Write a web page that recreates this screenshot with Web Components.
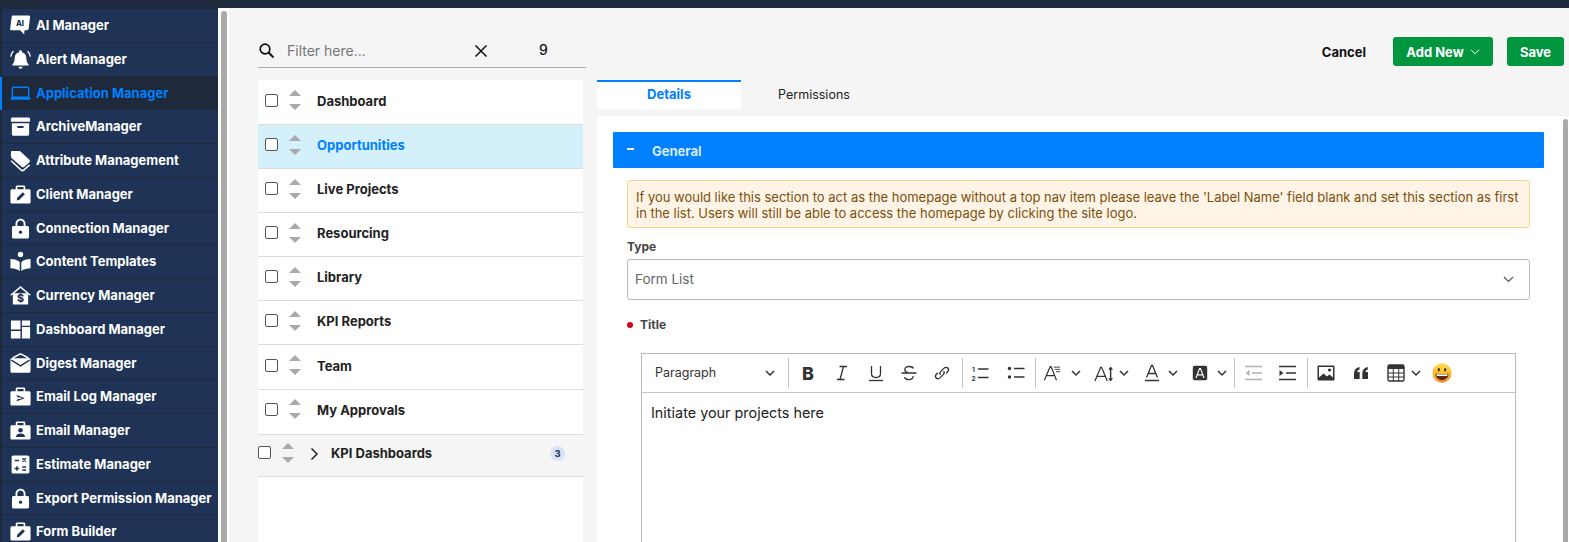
<!DOCTYPE html>
<html lang="en">
<head>
<meta charset="utf-8">
<title>Application Manager</title>
<style>
  html, body { margin: 0; height: 100%; overflow: hidden; }
  body { font-family: Inter, "Liberation Sans", sans-serif; background: #f5f5f5; }
</style>
</head>
<body>
<app-shell>
  <side-nav slot="nav">
    <nav-item icon="ai">AI Manager</nav-item>
    <nav-item icon="bell">Alert Manager</nav-item>
    <nav-item icon="laptop" active>Application Manager</nav-item>
    <nav-item icon="archive">ArchiveManager</nav-item>
    <nav-item icon="tags">Attribute Management</nav-item>
    <nav-item icon="casePen">Client Manager</nav-item>
    <nav-item icon="lock">Connection Manager</nav-item>
    <nav-item icon="reader">Content Templates</nav-item>
    <nav-item icon="house">Currency Manager</nav-item>
    <nav-item icon="quad">Dashboard Manager</nav-item>
    <nav-item icon="digest">Digest Manager</nav-item>
    <nav-item icon="caseLog">Email Log Manager</nav-item>
    <nav-item icon="casePerson">Email Manager</nav-item>
    <nav-item icon="calc">Estimate Manager</nav-item>
    <nav-item icon="lock">Export Permission Manager</nav-item>
    <nav-item icon="casePen">Form Builder</nav-item>
  </side-nav>

  <section slot="list">
    <filter-bar count="9"></filter-bar>
    <menu-list>
      <menu-row>Dashboard</menu-row>
      <menu-row selected>Opportunities</menu-row>
      <menu-row>Live Projects</menu-row>
      <menu-row>Resourcing</menu-row>
      <menu-row>Library</menu-row>
      <menu-row>KPI Reports</menu-row>
      <menu-row>Team</menu-row>
      <menu-row tail>My Approvals</menu-row>
      <menu-row group badge="3">KPI Dashboards</menu-row>
    </menu-list>
  </section>

  <top-actions slot="actions"></top-actions>
  <tab-strip slot="tabs"></tab-strip>

  <detail-panel slot="panel">
    <accordion-head>General</accordion-head>
    <notice-box>If you would like this section to act as the homepage without a top nav item please leave the 'Label Name' field blank and set this section as first in the list. Users will still be able to access the homepage by clicking the site logo.</notice-box>
    <form-select label="Type" value="Form List"></form-select>
    <required-label>Title</required-label>
    <rich-editor>Initiate your projects here</rich-editor>
  </detail-panel>
</app-shell>

<script>
const NAV_ICONS = {
  ai: `<path d="M4.500 1.500h16c1 0 1.600.7 1.500 1.700l-1.500 12.300c-.1 1-.8 1.500-1.700 1.500h-2.600l-.4 4.500-4.200-4.500H2.700c-1 0-1.600-.7-1.500-1.700L2.800 3c.1-1 .8-1.500 1.700-1.500z"/><text x="11.500" y="12.800" text-anchor="middle" font-family="Inter" font-size="8" font-weight="800" fill="#1e3356">AI</text>`,
  bell: `<path d="M12 2.400c.9 0 1.500.6 1.500 1.400v.6c2.900.7 4.600 3.100 4.600 6.100 0 3 .6 4.800 2.200 6.400.5.6.2 1.400-.6 1.400H4.300c-.8 0-1.100-.8-.6-1.400 1.600-1.600 2.200-3.400 2.200-6.400 0-3 1.700-5.400 4.600-6.100v-.6c0-.8.6-1.400 1.500-1.400z"/><path d="M9.800 19.600h4.400c0 1.200-1 2.100-2.200 2.100s-2.200-.9-2.200-2.100z"/><path d="M4.600 3.400C3 4.800 2 6.800 1.800 9M19.400 3.400C21 4.800 22 6.800 22.200 9" fill="none" stroke="currentColor" stroke-width="1.500"/>`,
  laptop: `<path d="M4.500 5.500h15a1 1 0 0 1 1 1V16h-17V6.500a1 1 0 0 1 1-1z" fill="none" stroke="currentColor" stroke-width="1.500"/><path d="M1.500 16.500h21v.6c0 .9-.7 1.500-1.500 1.500H3c-.8 0-1.500-.6-1.500-1.500z"/>`,
  archive: `<path d="M3.500 2.500h17c.8 0 1.500.7 1.500 1.500v3H2V4c0-.8.7-1.500 1.500-1.500z"/><path fill-rule="evenodd" d="M3 8.500h18V20c0 .9-.7 1.600-1.600 1.600H4.600C3.700 21.600 3 20.900 3 20zm5.800 3v2h6.400v-2z"/>`,
  tags: `<path d="M3 2h7.500c.6 0 1.100.2 1.500.6l9.300 8.700c.7.7.7 1.700 0 2.400l-5.500 5c-.7.6-1.600.6-2.300 0L2.600 9.300C2.200 8.900 2 8.400 2 7.800V3c0-.6.4-1 1-1z"/><path d="M2.200 11.300 12.800 21c.8.700 1.800.7 2.600 0l6.100-5.500" fill="none" stroke="currentColor" stroke-width="1.600" transform="translate(0 1)"/>`,
  casePen: `<path fill-rule="evenodd" d="M8.500 2.500h7c.9 0 1.500.7 1.500 1.500v2.500h4c.8 0 1.500.7 1.500 1.500v12c0 .8-.7 1.500-1.500 1.500H3c-.8 0-1.500-.7-1.500-1.500V8c0-.8.7-1.500 1.500-1.500h4V4c0-.8.6-1.500 1.500-1.500zm.3 1.600v2.400h6.400V4.100z"/><path d="m8 18.200.6-2.800 5.800-5.800 2.200 2.200-5.800 5.800z" fill="#1e3356"/>`,
  lock: `<path fill-rule="evenodd" d="M12 1.800c3 0 5.200 2.300 5.200 5.200v2.500h2.100c.9 0 1.600.7 1.600 1.600v9.700c0 .9-.7 1.600-1.600 1.600H4.700c-.9 0-1.600-.7-1.600-1.600v-9.700c0-.9.7-1.600 1.600-1.600h2.100V7c0-2.900 2.200-5.200 5.200-5.200zm0 1.900C10.100 3.700 8.700 5.100 8.700 7v2.500h6.600V7c0-1.900-1.400-3.300-3.300-3.300z"/><circle cx="12" cy="15.900" r="1.700" fill="#1e3356"/>`,
  reader: `<circle cx="12" cy="4.600" r="2.800"/><path d="M1.500 9.500c4 .1 7.500 1.200 9.700 3.200v9.100c-2.500-1.700-5.900-2.500-9.700-2.700zM22.500 9.500c-4 .1-7.500 1.200-9.700 3.200v9.100c2.500-1.700 5.900-2.500 9.700-2.700z"/>`,
  house: `<path d="M12 2 22.700 11.200l-.8 1.100-1.900-1.500V21.500H4V10.800l-1.900 1.500-.8-1.100z"/><path d="M12 4.300 5.500 9.700h13z" fill="#1e3356"/><text x="12" y="19.300" text-anchor="middle" font-family="Inter" font-size="11" font-weight="800" fill="#1e3356">$</text>`,
  quad: `<path d="M2 2.500h10v9.500H2zM13.500 2.500H22V8h-8.500zM13.500 9.500H22V21.500h-8.500zM2 13.500h10v8H2z"/>`,
  digest: `<path d="M4.500 8V5.800L12 2l7.500 3.800V8" fill="none" stroke="currentColor" stroke-width="1.500"/><path d="M1.500 7.500c0-.6.5-1 1-1h19c.5 0 1 .4 1 1V20c0 .9-.7 1.600-1.600 1.600H3.100c-.9 0-1.600-.7-1.600-1.600z"/><path d="m2.500 8.500 9.500 6 9.500-6" fill="none" stroke="#1e3356" stroke-width="1.500"/>`,
  caseLog: `<path fill-rule="evenodd" d="M8.500 2.500h7c.9 0 1.500.7 1.500 1.500v2.500h4c.8 0 1.500.7 1.500 1.500v12c0 .8-.7 1.500-1.500 1.500H3c-.8 0-1.500-.7-1.500-1.500V8c0-.8.7-1.500 1.500-1.500h4V4c0-.8.6-1.500 1.500-1.500zm.3 1.600v2.400h6.400V4.100z"/><path d="M7.500 10.200 16.500 13.700 7.500 17.200l1.700-2.700h3.600v-1.500H9.200z" fill="#1e3356"/>`,
  casePerson: `<path fill-rule="evenodd" d="M8.500 2.500h7c.9 0 1.500.7 1.500 1.500v2.500h4c.8 0 1.500.7 1.500 1.500v12c0 .8-.7 1.500-1.500 1.500H3c-.8 0-1.500-.7-1.500-1.500V8c0-.8.7-1.500 1.500-1.500h4V4c0-.8.6-1.500 1.500-1.500zm.3 1.600v2.400h6.400V4.100z"/><circle cx="12" cy="11.800" r="2.400" fill="#1e3356"/><path d="M7.300 18.700c0-2.300 2-3.500 4.700-3.500s4.700 1.200 4.700 3.500z" fill="#1e3356"/>`,
  calc: `<path d="M4.500 2.500h15c1 0 1.800.8 1.800 1.800v15.400c0 1-.8 1.800-1.800 1.800h-15c-1 0-1.800-.8-1.800-1.800V4.300c0-1 .8-1.800 1.800-1.800z"/><path d="M6 7.800h4.500M14 5.600l3.600 3.600M17.600 5.600 14 9.200M5.800 16.200h4.800M8.200 13.800v4.800M13.800 14.700h4M13.800 17.700h4" fill="none" stroke="#1e3356" stroke-width="1.500"/>`
};

const TOOL_ICONS = {
  bold: `<text x="10" y="16.500" text-anchor="middle" font-family="Inter" font-size="18" font-weight="800" fill="#333">B</text>`,
  italic: `<path d="M7.500 3.500h7.500M5 16.500h7.500M11.500 3.500 8 16.500" fill="none" stroke="#333" stroke-width="1.300"/>`,
  underline: `<path d="M5.500 3v7.500c0 2.700 1.800 4 4.500 4s4.500-1.300 4.500-4V3" fill="none" stroke="#333" stroke-width="1.300"/><path d="M3 17.500h14" stroke="#333" stroke-width="1.300"/>`,
  strike: `<path d="M14.500 5.500C13.800 4 12 3.500 10 3.500c-2.500 0-4.200 1.200-4.200 3 0 1.500 1 2.400 3 3M14 13c.6 2-1.500 3.700-4 3.700-2.100 0-3.900-.9-4.600-2.500M2.500 10h15" fill="none" stroke="#333" stroke-width="1.300"/>`,
  link: `<path d="M8.500 11.800c-1-1-.8-2.300.3-3.400l3-3c1.300-1.300 3-1.400 4-.4s.9 2.700-.4 4l-1.400 1.400M11.500 8.200c1 1 .8 2.300-.3 3.400l-3 3c-1.300 1.300-3 1.400-4 .4s-.9-2.700.4-4l1.400-1.400" fill="none" stroke="#333" stroke-width="1.300"/>`,
  ol: `<path d="M8 6h10.500M8 14.500h10.500" stroke="#333" stroke-width="1.500"/><text x="3.500" y="8.500" text-anchor="middle" font-family="Inter" font-size="6.500" font-weight="700" fill="#333">1</text><text x="3.500" y="17.500" text-anchor="middle" font-family="Inter" font-size="6.500" font-weight="700" fill="#333">2</text>`,
  ul: `<circle cx="3.500" cy="5.500" r="1.700" fill="#333"/><circle cx="3.500" cy="14" r="1.700" fill="#333"/><path d="M8 5.500h10.500M8 14h10.500" stroke="#333" stroke-width="1.500"/>`,
  size: `<path d="M1.500 18 8 3h1l6 15M4 13h9.500" fill="none" stroke="#333" stroke-width="1.300"/><path d="M12 3.500h7M13 6h6M14.500 8.500h4.500" stroke="#333" stroke-width="1"/>`,
  height: `<path d="M1 18 7 3.500h1L14 18M3.300 13h9" fill="none" stroke="#333" stroke-width="1.300"/><path d="M17.500 4v13" stroke="#333" stroke-width="1.500"/><path d="m15 6 2.500-3.500L20 6zM15 15l2.500 3.500L20 15z" fill="#333"/>`,
  color: `<path d="M4.500 14.500 9.500 2.500h1l5 12M6.300 10.500h7.400" fill="none" stroke="#333" stroke-width="1.300"/><path d="M3 17.500h14" stroke="#333" stroke-width="1.500"/>`,
  bg: `<rect x="2" y="2" width="16" height="16" rx="2" fill="#333"/><path d="M5.500 15.500 9.500 5h1l4 10.500M7 12h6" fill="none" stroke="#fff" stroke-width="1.300"/>`,
  outdent: `<path d="M2 3.500h17M9 10h10M2 16.500h17" stroke="#b0b0b0" stroke-width="1.500"/><path d="M6.500 7 2.500 10l4 3z" fill="#b0b0b0"/>`,
  indent: `<path d="M2 3.500h17M9 10h10M2 16.500h17" stroke="#333" stroke-width="1.500"/><path d="M2.500 7 6.500 10l-4 3z" fill="#333"/>`,
  image: `<path fill-rule="evenodd" d="M2.500 2.500h15c.6 0 1 .4 1 1v13c0 .6-.4 1-1 1h-15c-.6 0-1-.4-1-1v-13c0-.6.4-1 1-1zM3 4v10.500l4.500-4 3.500 3 2.500-2 3.500 3V4z" fill="#333"/><circle cx="13.500" cy="7" r="1.600" fill="#333"/>`,
  quote: `<path d="M3 16V10.500C3 7 5 4.800 8.500 4v2.600c-1.500.5-2.200 1.300-2.300 2.400h2.500v7zM11.300 16V10.500c0-3.500 2-5.700 5.500-6.500v2.600c-1.500.5-2.200 1.300-2.300 2.400H17v7z" fill="#333"/>`,
  table: `<rect x="2" y="2" width="16" height="16" rx="1.500" fill="none" stroke="#333" stroke-width="1.400"/><path d="M2 2h16v4H2z" fill="#333"/><path d="M2 10h16M2 14h16M7.300 6v12M12.700 6v12" stroke="#333" stroke-width="1"/>`,
  emoji: `<defs><linearGradient id="eg" x1="0" y1="0" x2="0" y2="1"><stop offset="0" stop-color="#fedf4c"/><stop offset=".6" stop-color="#fdb52e"/><stop offset="1" stop-color="#f4822a"/></linearGradient></defs><circle cx="10" cy="10" r="9.700" fill="url(#eg)"/><ellipse cx="6.800" cy="6.800" rx="1.100" ry="1.700" fill="#3a2a1a"/><ellipse cx="13.200" cy="6.800" rx="1.100" ry="1.700" fill="#3a2a1a"/><path d="M3.500 10.500c4.300 1 8.700 1 13 0 0 4.300-2.900 6.500-6.500 6.500s-6.500-2.200-6.500-6.500z" fill="#5b2b12"/><path d="M4.500 11c3.700.7 7.300.7 11 0l-.3 2H4.800z" fill="#fff"/>`
};

const chevron = `<svg width="10" height="6" viewBox="0 0 10 6"><path d="M1 1l4 4 4-4" fill="none" stroke="#333" stroke-width="1.500"/></svg>`;

class AppShell extends HTMLElement {
  constructor() {
    super();
    this.attachShadow({ mode: "open" }).innerHTML = `
    <style>
      :host { display: grid; grid-template-rows: 8px 1fr; height: 542px; overflow: hidden; }
      .topbar { background: #1e293b; }
      .body { display: grid; grid-template-columns: 218px 11px 368px 1fr; min-height: 0; }
      .rail { background: #fff; padding: 3px 2px 0 3px; }
      .rail i { display: block; height: 100%; background: #aaa; border-radius: 3px 3px 0 0; }
      .middle { display: flex; flex-direction: column; padding-left: 29px; }
      .right { display: flex; flex-direction: column; min-width: 0; }
    </style>
    <div class="topbar"></div>
    <div class="body">
      <slot name="nav"></slot>
      <div class="rail"><i></i></div>
      <div class="middle"><slot name="list"></slot></div>
      <div class="right">
        <slot name="actions"></slot>
        <slot name="tabs"></slot>
        <slot name="panel"></slot>
      </div>
    </div>`;
  }
}

class SideNav extends HTMLElement {
  constructor() {
    super();
    this.attachShadow({ mode: "open" }).innerHTML = `
    <style>
      :host { display: block; background: #1e293b; padding: 1.200px 0 0 2px; overflow: hidden; }
    </style>
    <slot></slot>`;
  }
}

class NavItem extends HTMLElement {
  connectedCallback() {
    const icon = NAV_ICONS[this.getAttribute("icon")] || "";
    this.attachShadow({ mode: "open" }).innerHTML = `
    <style>
      :host {
        display: flex; align-items: center; height: 32.75px;
        padding-left: 7px; gap: 4px;
        background: #1e3356; border-bottom: 1px solid #1e293b;
        color: #fff; font: 700 13px/1 Inter, sans-serif; white-space: nowrap;
      }
      :host([active]) { background: #1e293b; color: #0080ff; box-shadow: -2px 0 0 #0080ff; }
      svg { width: 23px; height: 23px; fill: currentColor; flex: none; }
    </style>
    <svg viewBox="0 0 24 24">${icon}</svg><slot></slot>`;
  }
}

class FilterBar extends HTMLElement {
  connectedCallback() {
    this.attachShadow({ mode: "open" }).innerHTML = `
    <style>
      :host {
        display: grid; grid-template-columns: 29px 184px 20px 1fr; align-items: center;
        height: 60px; padding-top: 26px; box-sizing: border-box;
        border-bottom: 1px solid #aaa; margin-bottom: 12px; width: 328px;
      }
      .ph { font: 400 14px/1 Inter, sans-serif; color: #777; }
      .count { font: 500 14px/1 Inter, sans-serif; color: #111; text-align: center; padding-left: 10px; margin-top: -2px; }
      svg { display: block; }
      .x { justify-self: center; }
    </style>
    <svg width="18" height="18" viewBox="0 0 18 18"><circle cx="7" cy="7" r="4.800" fill="none" stroke="#111" stroke-width="1.700"/><path d="m10.500 10.500 5 5" stroke="#111" stroke-width="1.900"/></svg>
    <span class="ph">Filter here...</span>
    <svg class="x" width="14" height="14" viewBox="0 0 14 14"><path d="M1.500 1.500l11 11M12.500 1.500l-11 11" stroke="#111" stroke-width="1.500"/></svg>
    <span class="count">${this.getAttribute("count")}</span>`;
  }
}

class MenuList extends HTMLElement {
  constructor() {
    super();
    this.attachShadow({ mode: "open" }).innerHTML = `
    <style>:host { display: block; width: 325px; height: 470px; box-sizing: border-box; padding-top: .9px; background: #fff; overflow: hidden; }</style>
    <slot></slot>`;
  }
}

class MenuRow extends HTMLElement {
  connectedCallback() {
    const group = this.hasAttribute("group");
    const badge = this.getAttribute("badge");
    this.attachShadow({ mode: "open" }).innerHTML = `
    <style>
      :host {
        display: flex; align-items: center; height: 41.1px;
        padding: 0 0 2px 7px; border-bottom: 1px solid #dcdcdc; background: #fff;
        font: 700 13px/1 Inter, sans-serif; color: #222;
      }
      :host([selected]) { background: #d3f0fb; color: #0080ff; }
      :host([tail]) { padding-bottom: 3.300px; }
      :host([group]) { background: #f5f5f5; padding: 0 0 3px; height: 38px; }
      .box {
        width: 11px; height: 11px; border: 1px solid #555; border-radius: 2px; background: #fff; flex: none;
        margin-top: -2px;
      }
      .sort { display: grid; gap: 8px; margin: -2px 0 0 11px; flex: none; }
      .sort i { display: block; width: 0; height: 0; border: 6.500px solid transparent; border-top: 0; border-bottom: 6.500px solid #aaa; }
      .sort i + i { border-bottom: 0; border-top: 6.500px solid #aaa; }
      .label { margin-left: 16px; flex: 1; }
      :host([group]) .label { margin-left: 0; }
      .caret { margin: 0 12px 0 16px; display: block; flex: none; }
      .badge {
        width: 15px; height: 15px; border-radius: 50%; background: #d9e2f5; color: #1e3356;
        font: 700 9.500px/15px Inter, sans-serif; text-align: center; margin-right: 18px;
      }
    </style>
    <span class="box"></span>
    <span class="sort"><i></i><i></i></span>
    ${group ? `<svg class="caret" width="9" height="14" viewBox="0 0 9 14"><path d="M1.500 1.500 7 7l-5.500 5.500" fill="none" stroke="#222" stroke-width="1.500"/></svg>` : ""}
    <span class="label"><slot></slot></span>
    ${badge ? `<span class="badge">${badge}</span>` : ""}`;
  }
}

class TopActions extends HTMLElement {
  constructor() {
    super();
    this.attachShadow({ mode: "open" }).innerHTML = `
    <style>
      :host { display: flex; justify-content: flex-end; align-items: center; height: 29px; margin: 29px 0 14px; padding-right: 5px; font: 700 13px/1 Inter, sans-serif; }
      .cancel { color: #111; margin: 1px 27px 0 0; }
      .btn { display: flex; align-items: center; justify-content: center; height: 29px; box-sizing: border-box; padding-top: 1px; gap: 6px; color: #fff; background: #02963f; border-radius: 3px; }
      .add { width: 100px; margin-right: 14px; }
      .save { width: 57px; }
    </style>
    <span class="cancel">Cancel</span>
    <span class="btn add">Add New <svg width="10" height="6" viewBox="0 0 10 6"><path d="M1 .8l4 4 4-4" fill="none" stroke="#fff" stroke-width="1"/></svg></span>
    <span class="btn save">Save</span>`;
  }
}

class TabStrip extends HTMLElement {
  constructor() {
    super();
    this.attachShadow({ mode: "open" }).innerHTML = `
    <style>
      :host { display: flex; height: 29px; margin-bottom: 7px; font: 400 12.500px/1 Inter, sans-serif; }
      span { display: flex; align-items: center; justify-content: center; width: 144px; box-sizing: border-box; }
      .on { background: #fff; border-top: 2px solid #0080ff; padding-bottom: 2px; color: #0080ff; font: 700 13px/1 Inter, sans-serif; }
      .off { color: #222; padding: 1px 0 0 2px; }
    </style>
    <span class="on">Details</span><span class="off">Permissions</span>`;
  }
}

class DetailPanel extends HTMLElement {
  constructor() {
    super();
    this.attachShadow({ mode: "open" }).innerHTML = `
    <style>
      :host { display: grid; grid-template-columns: 1fr 5px; flex: 1; background: #fff; min-height: 0; overflow: hidden; padding-right: 1px; height: 426px; }
      .content { padding: 16px 19px 0 17px; min-width: 0; }
      .bar { margin-top: 3px; background: #aaa; border-radius: 3px 3px 0 0; }
    </style>
    <div class="content"><slot></slot></div>
    <div class="bar"></div>`;
  }
}

class AccordionHead extends HTMLElement {
  constructor() {
    super();
    this.attachShadow({ mode: "open" }).innerHTML = `
    <style>
      :host { display: flex; align-items: center; height: 36px; box-sizing: border-box; padding: 2px 0 0 14px; background: #0080ff; color: #d6ecff; font: 700 13px/1 Inter, sans-serif; border-radius: 1px; margin: 0 0 12px -1px; }
      i { width: 7px; height: 2px; background: #e8f4ff; margin: -4px 18px 0 0; }
    </style>
    <i></i><slot></slot>`;
  }
}

class NoticeBox extends HTMLElement {
  constructor() {
    super();
    this.attachShadow({ mode: "open" }).innerHTML = `
    <style>
      :host { display: block; margin: 0 14px 0 13px; padding: 8px 2px 8px 8px; height: 48px; box-sizing: border-box; background: #fff4e5; border: 1px solid #fbd38d; border-radius: 3px; color: #7a4f0e; font: 400 12.980px/16px Inter, sans-serif; }
    </style>
    <slot></slot>`;
  }
}

class FormSelect extends HTMLElement {
  connectedCallback() {
    this.attachShadow({ mode: "open" }).innerHTML = `
    <style>
      :host { display: block; margin: 12px 14px 0 13px; }
      label { display: block; font: 700 12px/14px Inter, sans-serif; color: #444; margin-bottom: 5px; }
      .box { display: flex; align-items: center; justify-content: space-between; height: 41px; box-sizing: border-box; padding: 0 15px 0 7px; border: 1px solid #bbb; border-radius: 3px; color: #666; font: 400 13.500px/1 Inter, sans-serif; }
    </style>
    <label>${this.getAttribute("label")}</label>
    <div class="box"><span>${this.getAttribute("value")}</span><svg width="11" height="7" viewBox="0 0 11 7"><path d="M1 1l4.500 4.500L10 1" fill="none" stroke="#555" stroke-width="1.200"/></svg></div>`;
  }
}

class RequiredLabel extends HTMLElement {
  constructor() {
    super();
    this.attachShadow({ mode: "open" }).innerHTML = `
    <style>
      :host { display: flex; align-items: center; gap: 7px; margin: 18px 0 21px 13px; height: 14px; font: 700 12px/14px Inter, sans-serif; color: #444; }
      i { width: 6px; height: 6px; border-radius: 50%; background: #d0021b; }
    </style>
    <i></i><slot></slot>`;
  }
}

class ToolBtn extends HTMLElement {
  connectedCallback() {
    const name = this.getAttribute("name");
    const size = this.getAttribute("size") || 20;
    const w = this.getAttribute("w");
    const ml = this.getAttribute("ml") || 0;
    const inner = name === "chev" ? chevron : `<svg width="${size}" height="${size}" viewBox="0 0 20 20">${TOOL_ICONS[name]}</svg>`;
    this.attachShadow({ mode: "open" }).innerHTML = `
    <style>
      :host { display: flex; align-items: center; justify-content: center; flex: none; width: ${w}px; margin-left: ${ml}px; }
      svg { display: block; overflow: visible; }
    </style>${inner}`;
  }
}

class RichEditor extends HTMLElement {
  constructor() {
    super();
    const sep = ml => `<i style="margin-left:${ml}px"></i>`;
    const t = (name, w, ml, size) => `<tool-btn name="${name}" w="${w}" ${ml ? `ml="${ml}"` : ""} ${size ? `size="${size}"` : ""}></tool-btn>`;
    this.attachShadow({ mode: "open" }).innerHTML = `
    <style>
      :host { display: block; margin: 0 28px 0 27px; border: 1px solid #bbb; border-bottom: 0; height: 230px; }
      .bar { display: flex; align-items: center; height: 38px; border-bottom: 1px solid #c4c4c4; }
      .bar i { width: 1px; height: 30px; background: #c4c4c4; flex: none; }
      .para { display: flex; align-items: center; justify-content: space-between; box-sizing: border-box; width: 146px; padding: 0 13px; font: 400 12.500px/1 Inter, sans-serif; color: #333; flex: none; }
      .text { padding: 12px 9px; font: 400 14.400px/16px Inter, sans-serif; color: #222; }
    </style>
    <div class="bar">
      <div class="para"><span>Paragraph</span>${chevron}</div>
      ${sep(0)}
      ${t("bold", 38)}${t("italic", 29)}${t("underline", 40)}${t("strike", 26)}${t("link", 40)}
      ${sep(0)}
      ${t("ol", 34)}${t("ul", 38)}
      ${sep(0)}
      ${t("size", 32, 0, 18)}${t("chev", 16)}
      ${t("height", 26, 6, 19)}${t("chev", 16)}
      ${t("color", 28, 6)}${t("chev", 14)}
      ${t("bg", 24, 8, 18)}${t("chev", 20)}
      ${sep(2)}
      ${t("outdent", 35)}${t("indent", 33)}
      ${sep(4)}
      ${t("image", 36)}${t("quote", 34)}${t("table", 29, 3, 20)}${t("chev", 12)}${t("emoji", 40)}
    </div>
    <div class="text"><slot></slot></div>`;
  }
}

customElements.define("tool-btn", ToolBtn);
customElements.define("app-shell", AppShell);
customElements.define("side-nav", SideNav);
customElements.define("nav-item", NavItem);
customElements.define("filter-bar", FilterBar);
customElements.define("menu-list", MenuList);
customElements.define("menu-row", MenuRow);
customElements.define("top-actions", TopActions);
customElements.define("tab-strip", TabStrip);
customElements.define("detail-panel", DetailPanel);
customElements.define("accordion-head", AccordionHead);
customElements.define("notice-box", NoticeBox);
customElements.define("form-select", FormSelect);
customElements.define("required-label", RequiredLabel);
customElements.define("rich-editor", RichEditor);
</script>
</body>
</html>
